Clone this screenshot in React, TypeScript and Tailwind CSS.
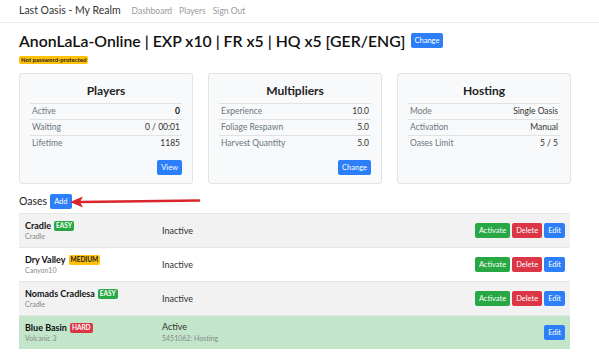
const font = { fontFamily: 'Lato, "Open Sans", Arial, sans-serif' };

const Btn = ({ color, children }: { color: string; children: React.ReactNode }) => (
  <span
    className={`${color} inline-flex items-center h-[15px] px-[4px] rounded-[2px] text-white text-[7.5px] leading-none`}
  >
    {children}
  </span>
);

const Badge = ({ color, children }: { color: string; children: React.ReactNode }) => (
  <span className={`${color} inline-flex items-center h-[10px] px-[2px] rounded-[2px] text-[6.5px] font-bold leading-none ml-[3px] translate-y-[1px]`}>
    {children}
  </span>
);

interface CardProps {
  title: string;
  rows: [string, string][];
  action?: string;
  boldFirst?: boolean;
}

const InfoCard: React.FC<CardProps> = ({ title, rows, action, boldFirst }) => (
  <div className="w-[174px] shrink-0 h-[111px] bg-[#f8f9fa] border border-[#e3e3e3] rounded-[3px] px-[10px] pt-[11px] flex flex-col">
    <div className="text-center text-[12px] font-bold text-[#222] leading-none h-[18px]">{title}</div>
    <div>
      {rows.map(([k, v], i) => (
        <div
          key={k}
          className="flex justify-between items-center h-[16px] border-t border-[#e2e2e2] text-[8.5px] px-[2px]"
        >
          <span className="text-[#6c757d]">{k}</span>
          <span className={boldFirst && i === 0 ? "font-bold text-[#111]" : "text-[#333]"}>{v}</span>
        </div>
      ))}
    </div>
    {action && (
      <div className="flex justify-end mt-[9px]">
        <Btn color="bg-[#2d7ff9]">{action}</Btn>
      </div>
    )}
  </div>
);

interface Oasis {
  name: string;
  map: string;
  level: "EASY" | "MEDIUM" | "HARD";
  status: string;
  detail?: string;
  bg: string;
  active?: boolean;
}

const oases: Oasis[] = [
  { name: "Cradle", map: "Cradle", level: "EASY", status: "Inactive", bg: "bg-[#f2f2f2]" },
  { name: "Dry Valley", map: "Canyon10", level: "MEDIUM", status: "Inactive", bg: "bg-white" },
  { name: "Nomads Cradlesa", map: "Cradle", level: "EASY", status: "Inactive", bg: "bg-[#f2f2f2]" },
  { name: "Blue Basin", map: "Volcanic 3", level: "HARD", status: "Active", detail: "5451062: Hosting", bg: "bg-[#c3e6cb]", active: true },
];

const levelColor = {
  EASY: "bg-[#28a745] text-white",
  MEDIUM: "bg-[#ffc107] text-[#222]",
  HARD: "bg-[#dc3545] text-white",
};

export default function App() {
  return (
    <div className="w-[599px] h-[362px] bg-white overflow-hidden" style={font}>
      <nav className="h-[23px] border-b border-[#ececec] flex items-center px-[19px] gap-[7px]">
        <span className="text-[10.5px] text-[#333] mr-[4px]">Last Oasis - My Realm</span>
        <span className="text-[8.5px] text-[#9a9a9a]">Dashboard</span>
        <span className="text-[8.5px] text-[#9a9a9a]">Players</span>
        <span className="text-[8.5px] text-[#9a9a9a]">Sign Out</span>
      </nav>

      <div className="px-[19px] w-[589px]">
        <div className="flex items-center mt-[10px] gap-[5px]">
          <h1 className="text-[15.8px] font-semibold text-[#111] leading-none whitespace-nowrap">
            AnonLaLa-Online | EXP x10 | FR x5 | HQ x5 [GER/ENG]
          </h1>
          <Btn color="bg-[#2d7ff9]">Change</Btn>
        </div>
        <div className="mt-[7px] h-[8px] flex">
          <span className="inline-flex items-center h-[8px] px-[2px] rounded-[2px] bg-[#ffc107] text-[6px] font-bold text-[#222] leading-none">
            Not password-protected
          </span>
        </div>

        <div className="flex gap-[15px] mt-[9px]">
          <InfoCard
            title="Players"
            boldFirst
            rows={[
              ["Active", "0"],
              ["Waiting", "0 / 00:01"],
              ["Lifetime", "1185"],
            ]}
            action="View"
          />
          <InfoCard
            title="Multipliers"
            rows={[
              ["Experience", "10.0"],
              ["Foliage Respawn", "5.0"],
              ["Harvest Quantity", "5.0"],
            ]}
            action="Change"
          />
          <InfoCard
            title="Hosting"
            rows={[
              ["Mode", "Single Oasis"],
              ["Activation", "Manual"],
              ["Oases Limit", "5 / 5"],
            ]}
          />
        </div>

        <div className="flex items-center gap-[3px] mt-[10px] h-[16px]">
          <span className="text-[10.5px] text-[#222]">Oases</span>
          <span className="relative flex">
            <Btn color="bg-[#2d7ff9]">Add</Btn>
            <svg className="absolute left-[19px] top-[1px]" width="134" height="14" viewBox="0 0 134 14">
              <path d="M12 7 L130 5.5" stroke="#d8262a" strokeWidth="2.6" strokeLinecap="round" />
              <path d="M1 7 L14 1.5 L11 7 L14 12.5 Z" fill="#d8262a" />
            </svg>
          </span>
        </div>

        <div className="mt-[3px] w-[551px]">
          {oases.map((o) => (
            <div key={o.name} className={`${o.bg} h-[34px] flex items-center border-t border-[#e6e6e6] pl-[6px] pr-[5px]`}>
              <div className="w-[137px]">
                <div className="flex items-center text-[9px] font-bold text-[#111] leading-none">
                  {o.name}
                  <Badge color={levelColor[o.level]}>{o.level}</Badge>
                </div>
                <div className="text-[7px] text-[#888] mt-[3px] leading-none">{o.map}</div>
              </div>
              <div className="flex-1">
                <div className="text-[9px] text-[#333] leading-none">{o.status}</div>
                {o.detail && <div className="text-[7px] text-[#888] mt-[4px] leading-none">{o.detail}</div>}
              </div>
              <div className="flex gap-[2px]">
                {!o.active && <Btn color="bg-[#28a745]">Activate</Btn>}
                {!o.active && <Btn color="bg-[#dc3545]">Delete</Btn>}
                <Btn color="bg-[#2d7ff9]">Edit</Btn>
              </div>
            </div>
          ))}
        </div>
      </div>
    </div>
  );
}
